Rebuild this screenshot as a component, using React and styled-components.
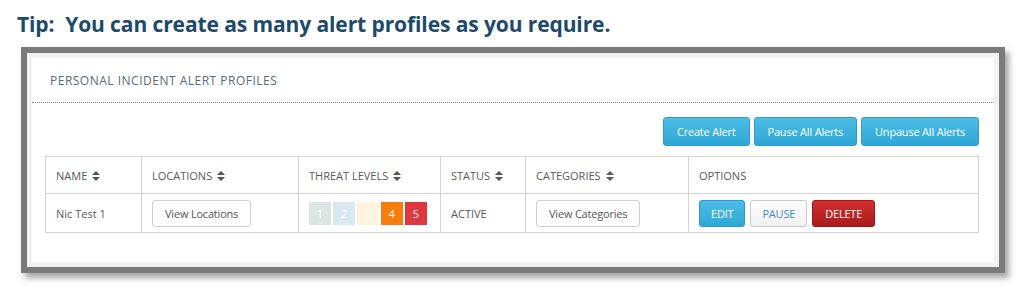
import React from "react";
import styled, { createGlobalStyle } from "styled-components";

const GlobalStyle = createGlobalStyle`
  html, body {
    margin: 0;
    padding: 0;
    background: #ffffff;
  }
  body {
    font-family: "Open Sans", "Liberation Sans", sans-serif;
  }
`;

const Page = styled.div`
  width: 1017px;
  height: 298px;
  padding-top: 9px;
  box-sizing: border-box;
`;

const Tip = styled.h1`
  margin: 0 0 8px 17px;
  font-family: "Open Sans", "Liberation Sans", sans-serif;
  font-size: 21px;
  font-weight: 700;
  line-height: 30px;
  letter-spacing: -0.1px;
  color: #1b4a6c;
  white-space: pre;
`;

const Frame = styled.div`
  margin-left: 21px;
  width: 984px;
  height: 226px;
  box-sizing: border-box;
  border: 6px solid #7b7b7b;
  background: #f3f3f3;
  padding: 5px;
  box-shadow: 4px 5px 6px rgba(0, 0, 0, 0.35);
`;

const Panel = styled.div`
  background: #ffffff;
  height: 100%;
`;

const PanelHeader = styled.div`
  height: 44px;
  display: flex;
  align-items: center;
  padding-left: 18px;
  border-bottom: 1px dotted #8a8a8a;
  font-size: 12px;
  letter-spacing: 0.5px;
  color: #5b6a77;
  text-transform: uppercase;
`;

const PanelBody = styled.div`
  padding: 14px 15px 0 13px;
`;

const Toolbar = styled.div`
  display: flex;
  justify-content: flex-end;
  gap: 4px;
  margin-bottom: 10px;
`;

const Button = styled.button`
  height: ${(p) => (p.$small ? "27px" : "29px")};
  padding: 0 ${(p) => p.$pad || 13}px;
  border-radius: 3px;
  font-family: "Open Sans", "Liberation Sans", sans-serif;
  font-size: 11px;
  letter-spacing: -0.2px;
  cursor: pointer;
  ${(p) =>
    p.$variant === "blue" &&
    `
    background: linear-gradient(#4dbde6, #2ea7d6);
    border: 1px solid #2b9ccb;
    color: #ffffff;
  `}
  ${(p) =>
    p.$variant === "red" &&
    `
    background: linear-gradient(#d3302e, #a81b1d);
    border: 1px solid #9a1818;
    color: #ffffff;
  `}
  ${(p) =>
    p.$variant === "light" &&
    `
    background: linear-gradient(#ffffff, #f0f0f0);
    border: 1px solid #c8c8c8;
    color: #3c8bbb;
  `}
  ${(p) =>
    p.$variant === "plain" &&
    `
    background: #ffffff;
    border: 1px solid #cfcfcf;
    color: #555555;
  `}
`;

const Table = styled.table`
  width: 100%;
  table-layout: fixed;
  border-collapse: collapse;
  border: 1px solid #cfcfcf;
  font-size: 11px;
  color: #5a5a5a;
`;

const Th = styled.th`
  box-sizing: border-box;
  height: 37px;
  padding: 0 10px;
  text-align: left;
  font-weight: 400;
  text-transform: uppercase;
  border: 1px solid #d3d3d3;
  width: ${(p) => (p.$w ? `${p.$w}px` : "auto")};
  white-space: nowrap;
`;

const Td = styled.td`
  height: 38px;
  padding: 0 10px;
  border: 1px solid #d3d3d3;
  white-space: nowrap;
`;

const Options = styled.div`
  display: flex;
  gap: 5px;
  align-items: center;
`;

const Levels = styled.div`
  display: flex;
  gap: 2px;
`;

const Level = styled.span`
  width: 22px;
  height: 23px;
  display: flex;
  align-items: center;
  justify-content: center;
  background: ${(p) => p.$bg};
  color: #ffffff;
  font-size: 11px;
`;

const SortIcon = () => (
  <svg width="8" height="10" viewBox="0 0 8 10" style={{ marginLeft: 5, verticalAlign: "-1px" }}>
    <path d="M4 0 L8 4 H0 Z" fill="#555" />
    <path d="M0 6 H8 L4 10 Z" fill="#555" />
  </svg>
);

const levels = [
  { n: 1, bg: "#dae6e2" },
  { n: 2, bg: "#d9e7f1" },
  { n: 3, bg: "#fef3dc" },
  { n: 4, bg: "#f97d0b" },
  { n: 5, bg: "#df373d" },
];

export default function App() {
  return (
    <>
      <GlobalStyle />
      <Page>
        <Tip>Tip:  You can create as many alert profiles as you require.</Tip>
        <Frame>
          <Panel>
            <PanelHeader>Personal Incident Alert Profiles</PanelHeader>
            <PanelBody>
              <Toolbar>
                <Button $variant="blue">Create Alert</Button>
                <Button $variant="blue">Pause All Alerts</Button>
                <Button $variant="blue">Unpause All Alerts</Button>
              </Toolbar>
              <Table>
                <thead>
                  <tr>
                    <Th $w={96}>Name<SortIcon /></Th>
                    <Th $w={157}>Locations<SortIcon /></Th>
                    <Th $w={142}>Threat Levels<SortIcon /></Th>
                    <Th $w={85}>Status<SortIcon /></Th>
                    <Th $w={163}>Categories<SortIcon /></Th>
                    <Th>Options</Th>
                  </tr>
                </thead>
                <tbody>
                  <tr>
                    <Td>Nic Test 1</Td>
                    <Td>
                      <Button $variant="plain" $small $pad={12}>View Locations</Button>
                    </Td>
                    <Td>
                      <Levels>
                        {levels.map((l) => (
                          <Level key={l.n} $bg={l.bg}>{l.n}</Level>
                        ))}
                      </Levels>
                    </Td>
                    <Td>ACTIVE</Td>
                    <Td>
                      <Button $variant="plain" $small $pad={12}>View Categories</Button>
                    </Td>
                    <Td>
                      <Options>
                        <Button $variant="blue" $small $pad={11}>EDIT</Button>
                        <Button $variant="light" $small $pad={11}>PAUSE</Button>
                        <Button $variant="red" $small $pad={12}>DELETE</Button>
                      </Options>
                    </Td>
                  </tr>
                </tbody>
              </Table>
            </PanelBody>
          </Panel>
        </Frame>
      </Page>
    </>
  );
}
